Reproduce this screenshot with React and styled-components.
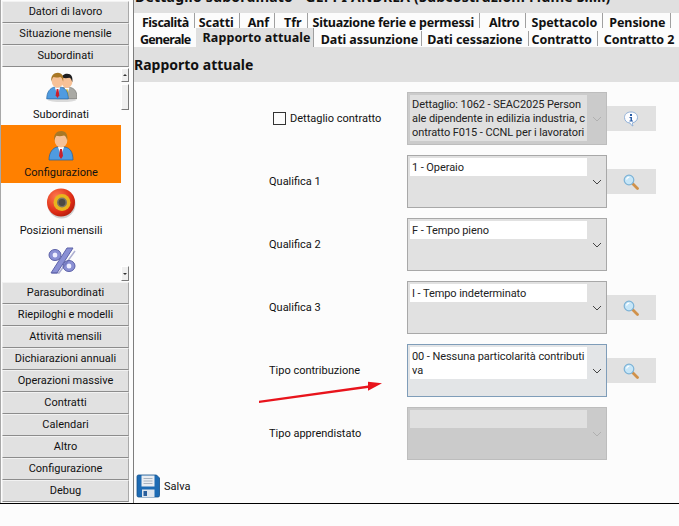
import React from "react";
import styled, { createGlobalStyle } from "styled-components";

const Global = createGlobalStyle`
  html, body { margin: 0; padding: 0; background: #fcfcfc; }
  body { width: 679px; height: 526px; overflow: hidden; font-family: Roboto, "Noto Sans", sans-serif; color: #111; }
  * { box-sizing: border-box; }
`;

const Frame = styled.div`
  position: relative;
  display: flex;
  width: 679px;
  height: 504px;
  border-bottom: 1px solid #000;
  background: #fcfcfc;
  overflow: hidden;
`;
const Sidebar = styled.nav`
  width: 134px;
  flex: none;
  display: flex;
  flex-direction: column;
  padding: 1px 4px 0 2px;
  border-left: 1px solid #a8a8a8;
  border-right: 1px solid #7d7d7d;
`;
const NavButton = styled.div`
  flex: none;
  height: 22px;
  display: flex;
  align-items: center;
  justify-content: center;
  padding-bottom: 2px;
  margin-left: -1px;
  width: 127px;
  background: #e1e1e1;
  border-top: 1px solid #f2f2f2;
  border-left: 1px solid #efefef;
  border-right: 1px solid #a9a9a9;
  border-bottom: 1px solid #8c8c8c;
  font-size: 11px;
`;
const ListWrap = styled.div`
  flex: none;
  height: 215px;
  display: flex;
  margin-left: -2px;
  width: 128px;
`;
const ListViewport = styled.div`
  width: 120px;
  flex: none;
  height: 100%;
  overflow: hidden;
`;
const ListItem = styled.div`
  height: 58px;
  display: flex;
  flex-direction: column;
  align-items: center;
  padding-top: 4px;
  background: ${(p) => (p.$active ? "#ff8000" : "#fcfcfc")};
  font-size: 11px;
  svg { flex: none; }
  span { margin-top: ${(p) => p.$gap ?? 4}px; line-height: 15px; }
`;
const Scrollbar = styled.div`
  width: 8px;
  flex: none;
  display: flex;
  flex-direction: column;
  justify-content: space-between;
  height: 100%;
  padding: 1px 0;
`;
const ScrollCol = styled.div`
  display: flex;
  flex-direction: column;
  gap: 2px;
`;
const ScrollBtn = styled.div`
  height: ${(p) => p.$h}px;
  background: #f0f0f0;
  border-right: 1px solid #7a7a7a;
  border-bottom: 1px solid #7a7a7a;
  border-left: 1px solid #fff;
  border-top: 1px solid #fff;
  display: flex;
  align-items: center;
  justify-content: center;
  &::after {
    content: "";
    display: ${(p) => (p.$dir ? "block" : "none")};
    width: 0;
    height: 0;
    border-left: 2px solid transparent;
    border-right: 2px solid transparent;
    ${(p) => (p.$dir === "up" ? "border-bottom: 2px solid #333;" : "border-top: 2px solid #333;")}
  }
`;
const Main = styled.main`
  flex: 1;
  min-width: 0;
  display: flex;
  flex-direction: column;
`;
const TitleBar = styled.div`
  height: 13px;
  background: #e0e0e0;
  overflow: hidden;
  padding-left: 1px;
  flex: none;
  font-family: "Noto Sans", sans-serif;
  font-size: 14px;
  font-weight: 700;
  line-height: 18px;
  white-space: nowrap;
`;
const TitleText = styled.div`
  margin-top: -12px;
  letter-spacing: 0.2px;
`;
const TabRow = styled.div`
  display: flex;
  height: ${(p) => p.$h}px;
  padding-left: 1px;
  flex: none;
`;
const Tab = styled.div`
  flex: none;
  height: ${(p) => (p.$active ? "19px" : "15px")};
  margin-top: ${(p) => (p.$second && !p.$active ? "3px" : "0")};
  padding-top: ${(p) => (p.$second ? "3px" : "4px")};
  padding-left: ${(p) => p.$l ?? 6}px;
  padding-right: ${(p) => p.$r ?? 5}px;
  border-right: 1px solid ${(p) => (p.$plain ? "transparent" : "#a0a0a0")};
  background: ${(p) => (p.$active ? "#e0e0e0" : "transparent")};
  font-family: "Noto Sans", sans-serif;
  font-size: 12.5px;
  font-weight: 700;
  line-height: 11px;
  letter-spacing: ${(p) => p.$ls ?? -0.07}px;
  white-space: nowrap;
`;
const Heading = styled.h2`
  margin: 0;
  flex: none;
  height: 35px;
  display: flex;
  align-items: center;
  background: #e0e0e0;
  font-family: "Noto Sans", sans-serif;
  font-size: 14px;
  font-weight: 700;
`;
const Form = styled.div`
  display: flex;
  flex-direction: column;
  gap: 10px;
  padding-top: 10px;
`;
const Row = styled.div`
  display: flex;
  align-items: center;
  padding-left: 134px;
  height: 53px;
`;
const Label = styled.label`
  width: 139px;
  flex: none;
  display: flex;
  align-items: center;
  gap: 4px;
  padding-left: ${(p) => p.$indent || 0}px;
  padding-bottom: 1px;
  font-size: 11px;
`;
const Check = styled.span`
  width: 13px;
  height: 13px;
  border: 1px solid #333;
  background: #fcfcfc;
  flex: none;
`;
const Combo = styled.div`
  position: relative;
  width: 200px;
  height: 53px;
  flex: none;
  padding: 2px;
  background: ${(p) => (p.$state === "disabled" ? "#cbcbcb" : p.$state === "focus" ? "#e3e5e7" : "#e1e1e1")};
  border: 1px solid ${(p) => (p.$state === "disabled" ? "#bdbdbd" : p.$state === "focus" ? "#7f9db9" : "#a8a8a8")};
  display: flex;
  align-items: flex-start;
`;
const ComboText = styled.div`
  width: 177px;
  height: ${(p) => p.$h}px;
  overflow: hidden;
  padding: 3px 1.5px 0 2px;
  background: ${(p) => (p.$muted ? "#e0e0e0" : "#fff")};
  font-size: 11px;
  line-height: 14px;
  letter-spacing: -0.08px;
  word-break: break-all;
  color: #222;
`;
const Chevron = styled.svg`
  position: absolute;
  right: 4px;
  top: 50%;
  margin-top: -3px;
`;
const SideButton = styled.div`
  width: 49px;
  height: 25px;
  flex: none;
  padding-right: 1px;
  background: #e1e1e1;
  display: flex;
  align-items: center;
  justify-content: center;
`;
const Footer = styled.div`
  margin-top: auto;
  height: 30px;
  display: flex;
  align-items: center;
  gap: 4px;
  padding: 0 0 4px 2px;
  font-size: 11px;
`;
const Arrow = styled.svg`
  position: absolute;
  left: 255px;
  top: 376px;
`;

const Person = ({ dark, grey }) => (
  <g>
    <path d="M3 31c0-8 4-12 8-13h8c5 1 8 5 8 13z" fill={grey ? "#a9a9a4" : "#4f9be0"} stroke={grey ? "#6d6d68" : "#1f5f9f"} strokeWidth=".7" />
    <path d="M12 18h6l-3 9z" fill="#fff" />
    <path d="M14 20h2l1 7-2 3-2-3z" fill={grey ? "#e4c23c" : "#c8202c"} />
    <ellipse cx="15" cy="11" rx="6.400" ry="7.600" fill="#f7c197" />
    <path d="M8.300 12C7 5 11 2 15.400 2c4.600 0 7 4 5.800 10-.6-3-1.600-5-3.200-5.400-3 .8-6 .6-7.500.2C9.300 8 8.700 10 8.300 12z" fill={dark ? "#1e1e20" : "#a87826"} />
  </g>
);
const SoloIcon = () => (
  <svg width="30" height="32" viewBox="0 0 30 32"><Person /></svg>
);
const PairIcon = () => (
  <svg width="32" height="31" viewBox="0 0 32 31">
    <ellipse cx="17" cy="29" rx="14" ry="2" fill="#00000022" />
    <g transform="translate(9 1) scale(.86)"><Person dark grey /></g>
    <g transform="translate(-1 0) scale(.9)"><Person /></g>
  </svg>
);
const TargetIcon = () => (
  <svg width="32" height="32" viewBox="0 0 32 32">
    <defs>
      <radialGradient id="tg" cx=".35" cy=".3" r=".8">
        <stop offset="0" stopColor="#ff7a50" /><stop offset=".7" stopColor="#dd2a14" /><stop offset="1" stopColor="#a91a0c" />
      </radialGradient>
    </defs>
    <ellipse cx="16.500" cy="17" rx="14" ry="14.500" fill="#8a8a8a" opacity=".4" />
    <circle cx="16" cy="15.500" r="14" fill="url(#tg)" />
    <circle cx="17" cy="15.500" r="8.500" fill="#e8b41e" />
    <circle cx="17" cy="15.500" r="5" fill="#7c7466" />
    <circle cx="17" cy="15.500" r="3.400" fill="#4c4a44" />
  </svg>
);
const PercentIcon = () => (
  <svg width="32" height="32" viewBox="0 0 32 32">
    <g stroke="#5d62a8" strokeWidth="1">
      <path d="M22 3h6L12 28H6z" fill="#8a90d4" />
      <ellipse cx="10" cy="10" rx="6" ry="5.500" fill="#8a90d4" />
      <ellipse cx="24" cy="21" rx="6" ry="5.500" fill="#8a90d4" />
    </g>
    <ellipse cx="10" cy="10" rx="2.400" ry="2.500" fill="#eef" />
    <ellipse cx="24" cy="21" rx="2.400" ry="2.500" fill="#eef" />
    <path d="M7 28h7l16-22" fill="none" stroke="#5d62a8" strokeOpacity=".5" strokeWidth="1.500" />
  </svg>
);
const Floppy = () => (
  <svg width="24" height="24" viewBox="0 0 24 24" style={{ flex: "none" }}>
    <path d="M2.500 1h18L23.500 4v17.500a1.500 1.500 0 0 1-1.500 1.500H2.500A1.500 1.500 0 0 1 1 21.500V2.500A1.500 1.500 0 0 1 2.500 1z" fill="#1d6bb4" stroke="#14508a" strokeWidth=".8" />
    <rect x="5.500" y="1.500" width="13" height="11" fill="#e9edf2" />
    <path d="M7.500 4.500h9M7.500 7h9M7.500 9.500h9" stroke="#a9b4c0" strokeWidth="1" />
    <rect x="6" y="15.500" width="12.500" height="7.500" fill="#dfe6ee" />
    <rect x="7.500" y="17" width="3.500" height="5" fill="#2a5f9c" />
  </svg>
);
const InfoIcon = () => (
  <svg width="16" height="16" viewBox="0 0 16 16">
    <path d="M8 1C3.800 1 1.500 3.400 1.500 6.500S3.800 12 7 12c.4 1.300 1.400 2.300 3 3-.5-1-.7-2-.5-3.200C12.700 11 14.500 9.100 14.500 6.500 14.500 3.400 12.200 1 8 1z" fill="#fdfdff" stroke="#8fb0d8" />
    <rect x="7" y="3" width="2" height="2" fill="#2b5fa8" />
    <path d="M6.500 6h2.500v3.600H10v.9H6.500v-.9h1V6.900h-1z" fill="#2b5fa8" />
  </svg>
);
const SearchIcon = () => (
  <svg width="16" height="16" viewBox="0 0 16 16">
    <path d="M9.500 9.500l5 5" stroke="#d0914a" strokeWidth="2.800" strokeLinecap="round" />
    <circle cx="6" cy="6" r="4.800" fill="#c6e6f8" stroke="#7cb2d6" strokeWidth="1.200" />
    <path d="M3.500 5.500c.4-1.400 1.400-2.200 2.800-2.300" stroke="#fff" strokeWidth="1.200" fill="none" />
  </svg>
);
const ChevronIcon = ({ muted }) => (
  <Chevron width="10" height="6" viewBox="0 0 10 6">
    <path d="M1 1l4 4 4-4" fill="none" stroke={muted ? "#b0b0b0" : "#444"} strokeWidth="1" />
  </Chevron>
);

const topNav = ["Datori di lavoro", "Situazione mensile", "Subordinati"];
const bottomNav = ["Parasubordinati", "Riepiloghi e modelli", "Attività mensili", "Dichiarazioni annuali", "Operazioni massive", "Contratti", "Calendari", "Altro", "Configurazione", "Debug"];
const tabsTop = [
  { t: "Fiscalità", l: 7, ls: -0.5 },
  { t: "Scatti", l: 4 },
  { t: "Anf", l: 8 },
  { t: "Tfr", l: 9 },
  { t: "Situazione ferie e permessi", l: 5, ls: -0.25 },
  { t: "Altro", l: 9 },
  { t: "Spettacolo" },
  { t: "Pensione", l: 6 },
];

const rows = [
  { check: true, label: "Dettaglio contratto", text: "Dettaglio: 1062 - SEAC2025 Personale dipendente in edilizia industria, contratto F015 - CCNL per i lavoratori dipendenti delle", h: 46, state: "disabled", side: "info" },
  { label: "Qualifica 1", text: "1 - Operaio", h: 18, side: "search" },
  { label: "Qualifica 2", text: "F - Tempo pieno", h: 18 },
  { label: "Qualifica 3", text: "I - Tempo indeterminato", h: 18, side: "search" },
  { label: "Tipo contribuzione", text: "00 - Nessuna particolarità contributiva", h: 32, state: "focus", side: "search" },
  { label: "Tipo apprendistato", text: "", h: 18, state: "disabled" },
];

export default function App() {
  return (
    <>
      <Global />
      <Frame>
        <Sidebar>
          {topNav.map((t) => <NavButton key={t}>{t}</NavButton>)}
          <ListWrap>
            <ListViewport>
              <ListItem $gap={5}><PairIcon /><span>Subordinati</span></ListItem>
              <ListItem $active><SoloIcon /><span>Configurazione</span></ListItem>
              <ListItem><TargetIcon /><span>Posizioni mensili</span></ListItem>
              <ListItem><PercentIcon /></ListItem>
            </ListViewport>
            <Scrollbar>
              <ScrollCol>
                <ScrollBtn $h={14} $dir="up" />
                <ScrollBtn $h={26} />
              </ScrollCol>
              <ScrollBtn $h={15} $dir="down" />
            </Scrollbar>
          </ListWrap>
          {bottomNav.map((t) => <NavButton key={t}>{t}</NavButton>)}
        </Sidebar>
        <Main>
          <TitleBar><TitleText>Dettaglio subordinato - GEPPI ANDREA (Subcostruzioni Fiume S.r.l.)</TitleText></TitleBar>
          <TabRow $h={15}>
            {tabsTop.map(({ t, l, ls }) => <Tab key={t} $l={l} $ls={ls}>{t}</Tab>)}
          </TabRow>
          <TabRow $h={19}>
            <Tab $second $l={5} $r={4} $ls={-0.7} $plain>Generale</Tab>
            <Tab $active $l={7} $r={2} $ls={0.1}>Rapporto attuale</Tab>
            <Tab $second $l={7} $r={3}>Dati assunzione</Tab>
            <Tab $second $l={5}>Dati cessazione</Tab>
            <Tab $second $l={3}>Contratto</Tab>
            <Tab $second $l={6} $plain>Contratto 2</Tab>
          </TabRow>
          <Heading>Rapporto attuale</Heading>
          <Form>
            {rows.map((r) => (
              <Row key={r.label}>
                <Label $indent={r.check ? 5 : 1}>
                  {r.check && <Check />}
                  {r.label}
                </Label>
                <Combo $state={r.state}>
                  <ComboText $h={r.h} $muted={r.state === "disabled"}>{r.text}</ComboText>
                  <ChevronIcon muted={r.state === "disabled"} />
                </Combo>
                {r.side && <SideButton>{r.side === "info" ? <InfoIcon /> : <SearchIcon />}</SideButton>}
              </Row>
            ))}
          </Form>
          <Footer><Floppy />Salva</Footer>
        </Main>
        <Arrow width="132" height="32" viewBox="0 0 132 32">
          <path d="M4 24.700L113 9.500L113 5.700L127 7.300L113 14.700L113 12L4 27Z" fill="#e8141c" />
        </Arrow>
      </Frame>
    </>
  );
}
